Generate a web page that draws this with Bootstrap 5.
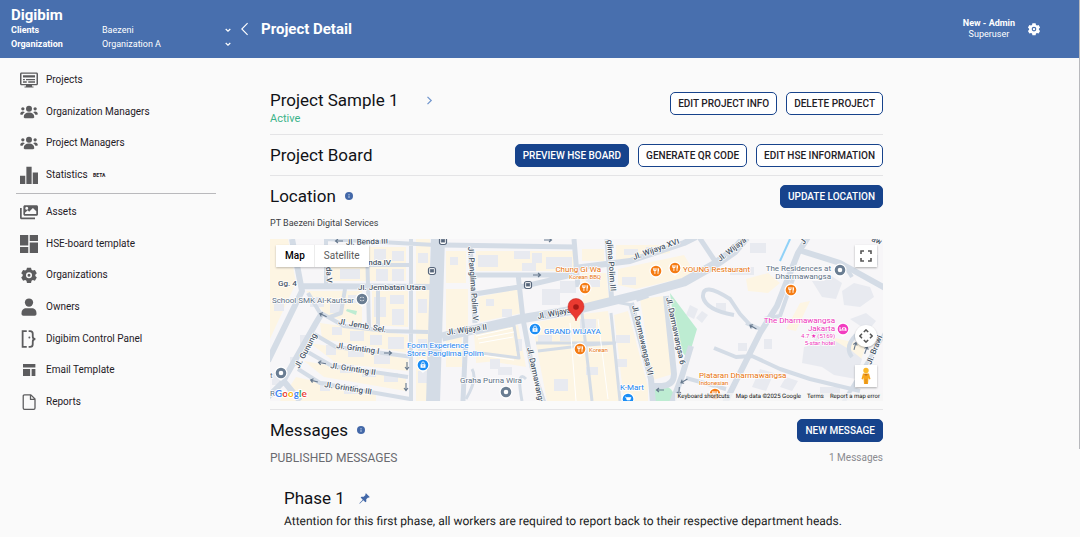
<!DOCTYPE html>
<html lang="en">
<head>
<meta charset="utf-8">
<meta name="viewport" content="width=device-width, initial-scale=1">
<title>Digibim – Project Detail</title>
<link href="https://cdn.jsdelivr.net/npm/bootstrap@5.3.0/dist/css/bootstrap.min.css" rel="stylesheet">
<style>
  body { font-family: Roboto, "Liberation Sans", sans-serif; background: #fafafa; color: #1b1c22; font-size: 10px; line-height: 16px; }
  h1, h2, h3, p, dl { margin: 0; }
  .topbar { background: #486fae; color: #fff; min-height: 58px; padding-right: 39px; }
  .brand-area { width: 236px; padding: 7px 0 7px 11px; }
  .brand-name { font-size: 15px; font-weight: 700; line-height: 16px; color: #fff; text-decoration: none; display: block; }
  .pick-row { display: grid; grid-template-columns: 91px 1fr; height: 14px; align-items: center; font-size: 9px; line-height: 14px; }
  .pick-row label { font-weight: 700; }
  .pick-row .form-select {
    --bs-form-select-bg-img: url("data:image/svg+xml,%3csvg xmlns='http://www.w3.org/2000/svg' viewBox='0 0 8 8'%3e%3cpath fill='none' stroke='%23fff' stroke-width='1.2' d='M1.7 3 4 5.2 6.3 3'/%3e%3c/svg%3e");
    background-color: transparent; border: 0; border-radius: 0; color: #fff; font-size: 9px; line-height: 14px;
    padding: 0 16px 0 0; min-height: 0; background-position: right 4px center; background-size: 8px 8px;
  }
  .page-title { font-size: 15px; font-weight: 700; line-height: 20px; margin-left: 12px; }
  .back-btn, .icon-btn, .next-btn { background: none; border: 0; padding: 0; color: inherit; display: flex; }
  .who { font-size: 9px; line-height: 11px; text-align: center; }

  .side { width: 25%; padding: 8px 54px 0 16px; }
  .side-group { display: flex; flex-direction: column; justify-content: space-between; height: 123px; }
  .side-group-long { height: 218px; }
  .side-link { display: flex; align-items: center; gap: 8px; height: 28px; padding-left: 4px; color: #1f2026; text-decoration: none; font-size: 10px; white-space: nowrap; }
  .side-link svg { width: 18px; height: 18px; flex: none; fill: #5c5c5e; }
  .side-link sup { font-size: 5px; font-weight: 700; top: 0; margin-left: 3px; vertical-align: middle; }
  .side-rule { border-top: 1px solid #b9b9bc; margin: 4px 0; }

  .content { width: 75%; padding: 26px 197px 0 0; }
  .head { font-size: 17px; font-weight: 400; line-height: 24px; color: #111217; }
  .section-row { display: flex; align-items: center; justify-content: space-between; min-height: 24px; }
  .block + .block { border-top: 1px solid #e4e4e6; padding-top: 8px; }
  .state { color: #3cb48a; font-size: 11px; line-height: 14px; }
  .next-btn { color: #6d93cc; margin-left: 26px; }
  .btn-set { display: flex; gap: 9px; }
  .btn-app {
    --bs-btn-font-size: 10px; --bs-btn-line-height: 15px; --bs-btn-padding-y: 3px; --bs-btn-padding-x: 7px;
    --bs-btn-border-radius: 5px; --bs-btn-font-weight: 500; --bs-btn-border-color: #17438c; --bs-btn-color: #1f2026; --bs-btn-bg: #fff;
    --bs-btn-hover-bg: #e8eefa; --bs-btn-hover-color: #17438c; --bs-btn-hover-border-color: #17438c; white-space: nowrap;
  }
  .btn-solid { --bs-btn-bg: #17438c; --bs-btn-color: #fff; --bs-btn-hover-bg: #123672; --bs-btn-hover-color: #fff; }
  .info-dot { width: 8px; height: 8px; margin-left: 9px; }
  .address { font-size: 9px; line-height: 12px; color: #3c3d43; margin: 9px 0 10px; }
  .published { font-size: 12px; line-height: 16px; color: #6a6b70; font-weight: 400; }
  .counter { color: #8a8b90; }
  .message { padding: 20px 0 8px 14px; }
  .message p { font-size: 12px; line-height: 16px; margin-top: 3px; text-rendering: geometricPrecision; }
  .message .pushpin { width: 11px; height: 11px; margin-left: 14px; }

  .map-box { position: relative; height: 162px; overflow: hidden; background: #f6f6f8; }
  .map-art { width: 100%; height: 100%; display: block; }
  .map-art text { font-family: Roboto, sans-serif; font-size: 8px; fill: #5d6f84; stroke: #fff; stroke-width: 1.5px; stroke-linejoin: round; paint-order: stroke; }
  .map-art .street { fill: #4a5768; font-weight: 500; }
  .map-art .food { fill: #e8730c; }
  .map-art .shop { fill: #1a83ee; }
  .map-art .stay { fill: #ee35bb; }
  .map-art .tiny { font-size: 6px; }
  .map-types { position: absolute; left: 6px; top: 6px; background: #fff; box-shadow: 0 1px 2px rgba(0,0,0,.25); display: flex; }
  .map-types button { border: 0; background: none; color: #5a5a5a; font-size: 10px; line-height: 22px; padding: 0 9px; }
  .map-types button.on { color: #000; font-weight: 500; border-right: 1px solid #ececec; }
  .map-tools { position: absolute; right: 6px; top: 6px; bottom: 14px; display: flex; flex-direction: column; gap: 10px; }
  .map-tools button { width: 22px; height: 22px; border: 0; padding: 0; background: #fff; box-shadow: 0 1px 2px rgba(0,0,0,.3); display: grid; place-items: center; }
  .map-legal { position: absolute; right: 0; bottom: 0; display: flex; gap: 6px; font-size: 6px; line-height: 8px; background: rgba(245,245,245,.75); padding: 0 3px; text-rendering: geometricPrecision; white-space: nowrap; }
  .map-legal a, .map-legal span { color: #111; text-decoration: none; }
  .map-legal button { border: 0; background: none; padding: 0; color: #111; text-rendering: inherit; }
  .scroll-thumb { position: fixed; right: 0; top: 0; width: 1px; height: 449px; background: #b8b9bd; }

  @media (max-width: 900px) {
    .side, .content { width: 100%; padding: 12px 16px; }
    .topbar, .page-body, .section-row, .btn-set { flex-wrap: wrap; }
  }
</style>
</head>
<body>
<header class="topbar d-flex align-items-center">
  <div class="brand-area">
    <a class="brand-name" href="#">Digibim</a>
    <div class="pick-row">
      <label for="client">Clients</label>
      <select class="form-select" id="client"><option>Baezeni</option></select>
    </div>
    <div class="pick-row">
      <label for="org">Organization</label>
      <select class="form-select" id="org"><option>Organization A</option></select>
    </div>
  </div>
  <button class="back-btn ms-1" type="button" aria-label="Back">
    <svg width="9" height="14" viewBox="0 0 9 14" fill="none" stroke="#fff" stroke-width="1.1"><path d="M7.6 1.2 1.8 7l5.8 5.8"/></svg>
  </button>
  <h1 class="page-title flex-grow-1">Project Detail</h1>
  <div class="who"><b>New - Admin</b><br>Superuser</div>
  <button class="icon-btn ms-2 ps-1" type="button" aria-label="Settings">
    <svg width="14" height="14" viewBox="0 0 24 24" fill="#fff"><use href="#cog"/></svg>
  </button>
</header>

<svg width="0" height="0" class="position-absolute" aria-hidden="true">
  <defs>
    <path id="cog" fill-rule="evenodd" d="M9.3 2.3h5.4l.7 2.7 1.8 1 2.7-.8 2.5 4.4-2 1.900v1.800l2 2-2.500 4.300-2.800-.8-1.700 1-.7 2.700H9.300L8.600 19.800l-1.700-1-2.800.8-2.500-4.300 2-2v-1.800l-2-1.900L4.100 5.200l2.700.8 1.800-1zM12 8.200a4 4 0 1 0 0 8 4 4 0 0 0 0-8zm0 2a2 2 0 1 1 0 4 2 2 0 0 1 0-4z"/>
    <g id="people">
      <circle cx="12" cy="7.500" r="4"/><circle cx="3.800" cy="7.800" r="2.200"/><circle cx="20.200" cy="7.800" r="2.200"/>
      <path d="M5 18.800c0-4 2.600-6 7-6s7 2 7 6c0 1-.6 1.400-1.500 1.400h-11c-.9 0-1.500-.4-1.500-1.400zM.3 14.500c0-2 1.300-3.200 3.500-3.200 1.200 0 2.100.3 2.700.9-1.700 1-2.500 2-2.900 3.400H1.300c-.7 0-1-.4-1-1.100zM23.700 14.500c0-2-1.300-3.200-3.500-3.200-1.200 0-2.100.3-2.700.9 1.700 1 2.500 2 2.900 3.400h2.300c.7 0 1-.4 1-1.100z"/>
    </g>
    <g id="info"><circle cx="8" cy="8" r="8" fill="#4368a8"/><path fill="#b9cbe6" d="M7 7h2v5H7zM7 4h2v2H7z"/></g>
    <g id="pin-base"><path d="M-6.500 0a6.500 6.500 0 0 1 13 0c0 4-4 5.500-6.500 8-2.500-2.500-6.500-4-6.500-8z" fill="#fff"/></g>
    <g id="pin-food"><use href="#pin-base"/><circle r="5.300" fill="#f57c14"/><path d="M-2.300-2.800v2.300M-1.100-2.800v5.700M.1-2.800v2.300M-2.300-.5H.1M2-2.800v5.700M2.500-2.500V.4" stroke="#fff" stroke-width=".9" fill="none"/></g>
    <g id="pin-shop"><use href="#pin-base"/><circle r="5.300" fill="#1a8df5"/><path d="M-2.500-.8h5v3.600h-5z" fill="#fff"/><path d="M-1.300-.8v-1a1.300 1.300 0 0 1 2.600 0v1" stroke="#fff" stroke-width=".8" fill="none"/><path d="M-.5.2h1v1.200h-1z" fill="#1a8df5"/></g>
    <g id="pin-gray"><use href="#pin-base"/><circle r="3.800" fill="#fff" stroke="#6a7d92" stroke-width="3"/></g>
    <g id="pin-bus"><rect x="-3.500" y="-3.500" width="7" height="7" rx="2" fill="#fff" stroke="#56657a" stroke-width="1.200"/><path d="M-1.800-1.800h3.600V1h-3.600zM-1.500 1.500h1M.5 1.500h1" fill="#56657a" stroke="#56657a" stroke-width=".5"/></g>
    <path id="way" d="M-4 0H3M1-2 3.500 0 1 2" fill="none" stroke="#66788d" stroke-width="1.100"/>
  </defs>
</svg>

<div class="page-body d-flex">
  <nav class="side" aria-label="Main">
    <div class="side-group">
      <a class="side-link" href="#"><svg viewBox="0 0 24 24"><path fill-rule="evenodd" d="M2 2h20c1.200 0 2 .8 2 2v13c0 1.200-.8 2-2 2h-6v1.500h2V22H6v-1.500h2V19H2c-1.200 0-2-.8-2-2V4c0-1.200.8-2 2-2zm0 1.800v13.400h20V3.800zM4 5.500h16v3.300H4zm0 5h2.500v1.800H4zm4 0h12v1.800H8zM4 13.800h5v1.800H4zm7 0h9v1.800h-9z"/></svg>Projects</a>
      <a class="side-link" href="#"><svg viewBox="0 0 24 24"><use href="#people"/></svg>Organization Managers</a>
      <a class="side-link" href="#"><svg viewBox="0 0 24 24"><use href="#people"/></svg>Project Managers</a>
      <a class="side-link" href="#"><svg viewBox="0 0 24 24"><path d="M0 13h7v11H0zM8.500 1h7v23h-7zM17 8.500h7V24h-7z"/></svg><span>Statistics <sup>BETA</sup></span></a>
    </div>
    <div class="side-rule"></div>
    <div class="side-group side-group-long">
      <a class="side-link" href="#"><svg viewBox="0 0 24 24"><path fill-rule="evenodd" d="M6.500 3H22c1.200 0 2 .8 2 2v10c0 1.200-.8 2-2 2H6.500c-1.200 0-2-.8-2-2V5c0-1.200.8-2 2-2zm.2 11.500h15V11l-4.500-4.500-5 5-2-2L6.700 13zM9 5a2 2 0 1 0 0 4 2 2 0 0 0 0-4zM0 6.500h2.300v12.700H20v2.300H2c-1.200 0-2-.8-2-2z"/></svg>Assets</a>
      <a class="side-link" href="#"><svg viewBox="0 0 24 24"><path d="M0 0h11v14H0zM13 0h11v8H13zM0 16h11v8H0zM13 10h11v14H13z"/></svg>HSE-board template</a>
      <a class="side-link" href="#"><svg viewBox="0 0 24 24"><use href="#cog"/></svg>Organizations</a>
      <a class="side-link" href="#"><svg viewBox="0 0 24 24"><circle cx="12" cy="6" r="5.500"/><path d="M2 20.500C2 15.500 5 13.500 8 13.500h8c3 0 6 2 6 7 0 2-1 3-2.500 3h-15C3 23.500 2 22.500 2 20.500z"/></svg>Owners</a>
      <a class="side-link" href="#"><svg viewBox="0 0 24 24"><path fill="none" stroke="#5c5c5e" stroke-width="2.400" d="M9 1.500H3.500v21H9M11.500 1.500h2c2.500 0 3.500 1.500 3.500 3.500v3.500c0 2 1 3.500 3.500 3.500-2.500 0-3.500 1.500-3.500 3.500V19c0 2-1 3.500-3.500 3.500h-2"/><circle cx="12.500" cy="10" r="1.300"/></svg>Digibim Control Panel</a>
      <a class="side-link" href="#"><svg viewBox="0 0 24 24"><path d="M4 4h16.500v4.500H4zM4 10.500h9.500V20H4zM15.500 10.500h5V20h-5z"/></svg>Email Template</a>
      <a class="side-link" href="#"><svg viewBox="0 0 24 24"><path fill="none" stroke="#5c5c5e" stroke-width="1.700" stroke-linejoin="round" d="M6 2.500h8.500l5.500 5.500v12c0 1-.6 1.700-1.700 1.700H6c-1 0-1.700-.6-1.700-1.700V4.200c0-1 .6-1.700 1.700-1.700zM14 2.800V8.500h5.700"/></svg>Reports</a>
    </div>
  </nav>

  <main class="content">
    <section class="block pb-2">
      <div class="section-row align-items-start">
        <div>
          <div class="d-flex align-items-center pt-1">
            <h2 class="head">Project Sample 1</h2>
            <button class="next-btn" type="button" aria-label="Next project"><svg width="8" height="9" viewBox="0 0 8 9" fill="none" stroke="currentColor" stroke-width="1.200"><path d="m2.500.8 3.700 3.700-3.700 3.700"/></svg></button>
          </div>
          <p class="state">Active</p>
        </div>
        <div class="btn-set mt-1 pt-1"><button class="btn btn-app" type="button">EDIT PROJECT INFO</button><button class="btn btn-app" type="button">DELETE PROJECT</button></div>
      </div>
    </section>

    <section class="block pb-2">
      <div class="section-row">
        <h2 class="head">Project Board</h2>
        <div class="btn-set"><button class="btn btn-app btn-solid" type="button">PREVIEW HSE BOARD</button><button class="btn btn-app" type="button">GENERATE QR CODE</button><button class="btn btn-app" type="button">EDIT HSE INFORMATION</button></div>
      </div>
    </section>

    <section class="block pb-2">
      <div class="section-row">
        <h2 class="head d-flex align-items-center">Location <svg class="info-dot" viewBox="0 0 16 16"><use href="#info"/></svg></h2>
        <button class="btn btn-app btn-solid" type="button">UPDATE LOCATION</button>
      </div>
      <p class="address">PT Baezeni Digital Services</p>
      <div class="map-box">
        <svg class="map-art" viewBox="0 0 613 162" preserveAspectRatio="xMidYMid slice" role="img" aria-label="Street map around Jl. Wijaya II">
          <rect width="613" height="162" fill="#f7f6f8"/>
          <!-- commercial blocks -->
          <g fill="#fdf5e3">
            <path d="M0 0h18l8 44-28 60zM36 52h56v36L56 76zM102 52h36v36l-36-2zM50 84l88 12v18l-86-14zM40 104l98 16v12L66 124zM34 122l102 18v12L54 138zM26 138l80 18v6H10zM60 8h76v34H62zM146 0h14v162h-14z"/>
            <path d="M176 12h20v32h-20zM206 12h98v20h-98zM208 58l40-8 4 24-42 9zM176 50h22v38l-22 5zM204 96l44-10 8 42-50-8zM206 96h42v24l-42 4zM262 84l42-8 34-4 14 90h-75zM176 98h16v30h-16zM312 10h22v12h-22zM312 34h24l3 26-26 6zM348 30l66-14 12 20-60 14-18-4zM346 6h54v8l-54 8zM344 76l14-4 20 76v14h-24zM370 60l24-3 9 78-20 6zM476 40l22-6 12 10-12 10-20-2zM530 64l10-2-14 30-10-2zM560 98l36 8-8 24-26-6z"/>
          </g>
          <!-- buildings -->
          <g fill="#e8eaf0">
            <path d="M40 58h14v10H40zM60 62h12v12H60zM78 56h14v8H78zM104 58h12v20h-12zM120 56h14v9h-14zM122 70h12v16h-12zM62 88h10v8H62zM80 92h14v10H80zM100 96h12v10h-12zM118 98h16v12h-16zM56 106h10v10H56zM78 110h16v8H78zM104 116h16v9h-16zM70 126h14v8H70zM92 130h14v8H92zM114 134h14v9h-14zM50 142h10v10H50zM74 146h14v9H74zM4 60h10v12H4zM30 96h9v10h-9zM20 118h9v9h-9zM68 12h12v10H68zM86 12h10v12H86zM104 10h12v11h-12zM122 12h12v10h-12zM106 30h12v12h-12zM122 30h12v12h-12zM70 30h20v10H70zM148 14h10v10h-10zM148 60h9v14h-9zM148 100h9v12h-9zM148 132h9v12h-9zM2 134h12v12H2z"/>
            <path d="M244 12h16v8h-16zM262 14h10v10h-10zM276 18h26v12h-26zM252 24h14v8h-14zM180 18h8v8h-8zM216 60h8v7h-8zM232 70h10v8h-10zM272 50h18v16h-18zM290 42h16v12h-16zM220 120h10v10h-10zM228 128h14v8h-14zM246 100h6v12h-6zM268 96h14v8h-14zM290 92h12v10h-12zM284 140h14v12h-14zM310 80h16v10h-16zM346 96h14v8h-14zM347 120h10v8h-10zM316 128h12v8h-12zM208 16h20v12h-20zM316 38h14v10h-14zM352 38h14v8h-14zM354 10h14v6h-14zM376 8h14v5h-14zM420 66l8 4-4 10-8-4zM432 72l6 4-6 8-6-5z"/>
            <path d="M542 42h12l6-6 12 8-6 16-14-2zM572 52l12-8 16 4 4 10-14 10-16-2zM540 92l10-6 12 6-3 8-14 2zM548 104l14-4 20 12 10 8-6 20-22-4-12-8-20-4 2-16zM594 16h14v10h-14zM490 130l14 4-8 18-14-4zM516 138l12 4-6 10-12-4zM580 80l16-6 10 8-8 10zM460 28h24v8h-24zM480 4h16v10h-16zM446 64h10v8h-10zM550 148h20v10h-20zM468 104h9v8h-9zM494 100h8v10h-8z"/>
          </g>
          <!-- parks and water -->
          <path d="M400 54 427 90 418 120 413 114 404 84zM77 70l10 2-1 4-10-4z" fill="#bdecd2"/><circle cx="393" cy="158" r="11" fill="#bdecd2"/>
          <path d="M520 0 510 22" stroke="#90d1f7" stroke-width="2"/>
          <!-- roads -->
          <g fill="none" stroke="#d4dce6" stroke-linejoin="round" stroke-width="4">
            <path stroke-width="6" d="M-2 122 32 52 22 0M29 47 165 48M-2 158 12 144 46 84 52 74M12 140 30 162"/>
            <path d="M51 74 74 87 116 92 158 93M44 95 66 108 143 118M36 112 62 127 138 138M28 130 50 144 106 154 140 160M141 0V162M97 4 99 91M56 0 56 46M56 0 165 6M60 26H141M75 50 71 74 60 78M38 54 50 74M108 50V90"/>
            <path stroke-width="14" d="M168-2 163 164"/>
            <path stroke-width="5" d="M173 6 306 8M200 6 205 84M196 94 193 162M203 36H303M205 55 255 47 306 35M248 35 253 80 262 128 274 164M304 0 308 48M337 0 342 65M429-2 445 22"/>
            <path stroke-width="9" d="M172 98 250 80 310 70 371 55 414 43 444 26 464 12 476-2"/>
            <path stroke-width="6" d="M304 29 360 22 414 4 426-2M538-2 528 14 507 67 490 94 467 140 455 164M532 12 570 24 615 49M361 64 381 140 383 164M396 57 404 135Q404 146 392 147L381 147M366 60 378 56M402 164 412 137 421 107"/>
            <path stroke-width="3" d="M341 74 350 162M312 74 322 162M206 94l38-8 5 33-46-6M268 112 318 106 345 104M340 62 362 66M256 140q-10-10-4 22M266 104h80M196 160q12-20 6-30"/>
            <path d="M483 89 470 75 460 60Q432 42 433 58 436 71 464 76M444 109 466 118 482 117 510 130 540 140 590 152M523 40 510 77 494 80M416 139 456 150M615 94 573 164M582 118q-8-10 4-22M476 84 490 90M575 27 582 38"/>
          </g>
          <g fill="none" stroke="#fff" stroke-width="1"><path d="M206 97l36-8M208 100l36-7M209 104l34-6M210 116l34 5M300 84l6 78M328 80l10 80"/></g>
          <!-- direction arrows -->
          <use href="#way" transform="translate(69 2) rotate(180)"/><use href="#way" transform="translate(267 36)"/><use href="#way" transform="translate(53 76) rotate(205)"/><use href="#way" transform="translate(118 114)"/><use href="#way" transform="translate(52 124) rotate(190)"/><use href="#way" transform="translate(44 142) rotate(195)"/><use href="#way" transform="translate(137 127) rotate(90)"/><use href="#way" transform="translate(136 148) rotate(90)"/><use href="#way" transform="translate(483 88) rotate(210)"/><use href="#way" transform="translate(390 151) rotate(180)"/><use href="#way" transform="translate(409 152) rotate(95)"/><use href="#way" transform="translate(414 142) rotate(150)"/><use href="#way" transform="translate(585 107) rotate(-75)"/><use href="#way" transform="translate(596 111) rotate(-70)"/><use href="#way" transform="translate(278 1)"/>
          <!-- street names -->
          <g class="streets">
            <text class="street" transform="translate(76 6) rotate(-2)">Jl. Benda III</text>
            <text class="street" x="121" y="26" text-anchor="end">nda IV</text>
            <text class="street" transform="translate(56 28) rotate(88)">da V</text>
            <text class="street" x="8" y="47">Gg. 4</text>
            <text class="street" x="88" y="51">Jl. Jembatan Utara</text>
            <text class="street" transform="translate(68 85) rotate(10)">Jl. Jemb. Sel.</text>
            <text class="street" transform="translate(66 109) rotate(8)">Jl. Grinting I</text>
            <text class="street" transform="translate(60 129) rotate(9)">Jl. Grinting II</text>
            <text class="street" transform="translate(54 148) rotate(9)">Jl. Grinting III</text>
            <text class="street" transform="translate(29 130) rotate(-62)">Jl. Gunung</text>
            <text class="street" transform="translate(198 8) rotate(86)">Jl. Panglima Polim V</text>
            <text class="street" transform="translate(177 96) rotate(-8)">Jl. Wijaya II</text>
            <text class="street" transform="translate(268 80) rotate(-11)">Jl. Wijaya</text>
            <text class="street" transform="translate(257 109) rotate(78)">Jl. Darmawangs</text>
            <text class="street" transform="translate(337 1) rotate(86)">glima Polim III</text>
            <text class="street" transform="translate(364 21) rotate(-20)">Jl. Wijaya XVI</text>
            <text class="street" transform="translate(450 23) rotate(-38)">Jl. Wijaya</text>
            <text class="street" transform="translate(362 67) rotate(77)">Jl. Darmawangsa VI</text>
            <text class="street" transform="translate(396 59) rotate(78)">Jl. Darmawangsa 6</text>
            <text class="street" transform="translate(534 6) rotate(-55)">J</text>
            <text class="street" transform="translate(601 2) rotate(22)">aw</text>
            <text class="street" transform="translate(601 126) rotate(-68)">Jl. Brawi</text>
          </g>
          <!-- places -->
          <text x="84" y="64" text-anchor="end">School SMK Al-Kautsar</text>
          <g transform="translate(92 60)"><use href="#pin-gray"/><path d="M-3 0 0-2 3 0 0 2z" fill="#6a7d92"/></g>
          <use href="#pin-gray" x="11" y="134"/><text x="0" y="139">t</text><text x="0" y="157">Ro</text>
          <use href="#pin-bus" x="173" y="2"/><use href="#pin-bus" x="162" y="32"/><use href="#pin-bus" x="258" y="46"/>
          <text class="shop" x="137" y="109">Foom Experience</text><text class="shop" x="137" y="117">Store Panglima Polim</text><use href="#pin-shop" x="153" y="126"/>
          <text x="190" y="144">Graha Purna Wira</text><use href="#pin-gray" x="236" y="153"/>
          <text class="food" x="331" y="33" text-anchor="end">Chung Gi Wa</text><text class="food tiny" x="331" y="40" text-anchor="end">Korean BBQ</text><use href="#pin-food" x="315" y="49"/>
          <use href="#pin-food" x="386" y="32"/><use href="#pin-food" x="405" y="29"/><text class="food" x="413" y="33">YOUNG Restaurant</text>
          <use href="#pin-shop" x="265" y="90"/><text class="shop" x="274" y="95">GRAND WIJAYA</text>
          <use href="#pin-food" x="310" y="110"/><text class="food tiny" x="319" y="113">Korean</text>
          <text class="shop" x="350" y="151">K-Mart</text>
          <g transform="translate(358 160)"><use href="#pin-base"/><circle r="5.300" fill="#1a8df5"/><path d="M-3-2h1l1 3h3l1-2.500h-4.500" fill="#fff" stroke="#fff" stroke-width=".6"/></g>
          <text x="561" y="32" text-anchor="end">The Residences at</text><text x="561" y="40" text-anchor="end">Dharmawangsa</text><use href="#pin-gray" x="570" y="31"/>
          <use href="#pin-food" x="521" y="51"/>
          <text class="stay" x="565" y="84" text-anchor="end">The Dharmawangsa</text><text class="stay" x="565" y="92" text-anchor="end">Jakarta</text><text class="stay tiny" x="565" y="99" text-anchor="end">4.7 ★ (5169)</text><text class="stay tiny" x="565" y="106" text-anchor="end">5-star hotel</text>
          <g transform="translate(573 90)"><use href="#pin-base"/><circle r="5.300" fill="#f23cc0"/><path d="M-3-2v4M-3 1h6M3 2V-.5M-.5.5V-1.200H2.500V.5" fill="none" stroke="#fff"/></g>
          <text class="food" x="429" y="139">Plataran Dharmawangsa</text><text class="food tiny" x="429" y="146">Indonesian</text><use href="#pin-food" x="445" y="155"/>
          <path d="M306 82c-1-6-8-8-8-14.500a8 8 0 0 1 16 0c0 6.500-7 8.500-8 14.500z" fill="#ea3a30" stroke="#c5221f" stroke-width=".5"/><circle cx="306" cy="68" r="2.800" fill="#a51a16"/>
        </svg>
        <svg class="position-absolute bottom-0 start-0" width="44" height="16" viewBox="0 0 44 16" role="img" aria-label="Google"><text x="5" y="12" font-family="Lato, Roboto, sans-serif" font-weight="700" font-size="10" stroke="#fff" stroke-width="2" paint-order="stroke"><tspan fill="#4285f4">G</tspan><tspan fill="#ea4335">o</tspan><tspan fill="#fbbc04">o</tspan><tspan fill="#4285f4">g</tspan><tspan fill="#34a853">l</tspan><tspan fill="#ea4335">e</tspan></text></svg>
        <div class="map-types"><button class="on" type="button">Map</button><button type="button">Satellite</button></div>
        <div class="map-tools">
          <button type="button" aria-label="Full screen"><svg width="12" height="12" viewBox="0 0 12 12" fill="none" stroke="#555" stroke-width="1.600"><path d="M1 4V1h3M8 1h3v3M11 8v3H8M4 11H1V8"/></svg></button>
          <button class="rounded-circle mt-auto" type="button" aria-label="Move map"><svg width="14" height="14" viewBox="0 0 14 14" fill="none" stroke="#555" stroke-width="1.500"><path d="M4.800 3 7 .9 9.200 3M11 4.800 13.100 7 11 9.200M9.200 11 7 13.100 4.800 11M3 9.200.9 7 3 4.800"/></svg></button>
          <button class="mt-2" type="button" aria-label="Street view"><svg width="12" height="18" viewBox="0 0 12 18"><circle cx="6" cy="3.500" r="2.700" fill="#fbb829"/><path d="M3 6.500h6l1.500 5.500-1.500.5-.5-2-.5 6.500H4l-.5-6.500-.5 2-1.500-.5z" fill="#f6a51c"/><path d="M4 7h4l-2 2zM5.700 12h.6v5h-.6z" fill="#c9751b"/></svg></button>
        </div>
        <div class="map-legal"><button type="button">Keyboard shortcuts</button><span>Map data ©2025 Google</span><a href="#">Terms</a><a href="#">Report a map error</a></div>
      </div>
    </section>

    <section class="block">
      <div class="section-row">
        <h2 class="head d-flex align-items-center">Messages <svg class="info-dot" viewBox="0 0 16 16"><use href="#info"/></svg></h2>
        <button class="btn btn-app btn-solid" type="button">NEW MESSAGE</button>
      </div>
      <div class="section-row align-items-start pt-2">
        <h3 class="published">PUBLISHED MESSAGES</h3>
        <span class="counter">1 Messages</span>
      </div>
      <article class="message">
        <h3 class="head d-flex align-items-center">Phase 1
          <svg class="pushpin" viewBox="0 0 12 12" fill="#4368a8"><path d="M7.600.3 11.700 4.400 10.800 5.100 9.900 4.900 7.900 6.900 8 9.300 7 10.200 4.700 7.900.8 11.600.4 11.200 4.100 7.300 1.800 5 2.700 4 5.100 4.100 7.100 2.100 6.900 1.200z"/></svg>
        </h3>
        <p>Attention for this first phase, all workers are required to report back to their respective department heads.</p>
      </article>
    </section>
  </main>
</div>
<div class="scroll-thumb" aria-hidden="true"></div>
<script src="https://cdn.jsdelivr.net/npm/bootstrap@5.3.0/dist/js/bootstrap.bundle.min.js"></script>
</body>
</html>
